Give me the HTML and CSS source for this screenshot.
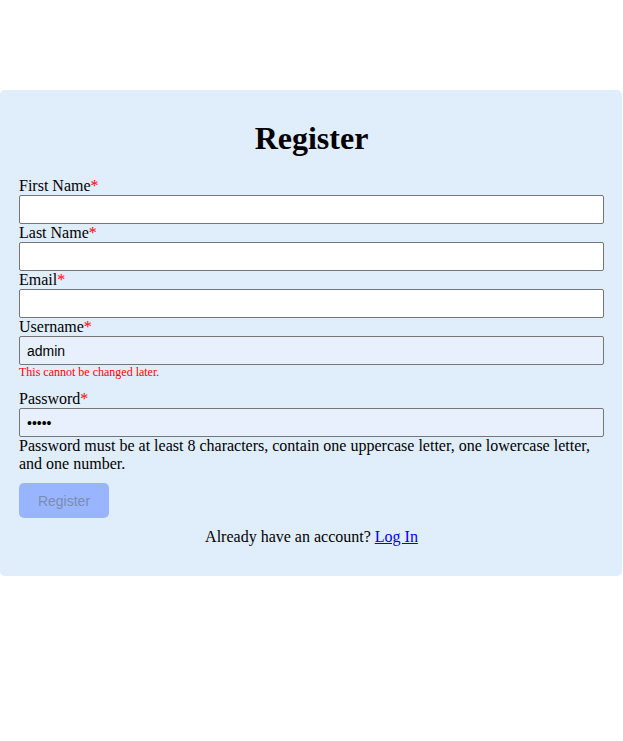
FILE: index.html
```html
<!DOCTYPE html>
<html>
<head>
<meta charset="utf-8">
<link rel="stylesheet" href="styles.css">
</head>
<body>
<div class="page">
  <form class="card">
    <h1 class="title">Register</h1>
    <label class="label">First Name<span class="req">*</span></label>
    <input class="field" type="text">
    <label class="label">Last Name<span class="req">*</span></label>
    <input class="field" type="text">
    <label class="label">Email<span class="req">*</span></label>
    <input class="field" type="email">
    <label class="label">Username<span class="req">*</span></label>
    <input class="field filled" type="text" value="admin">
    <small class="note">This cannot be changed later.</small>
    <label class="label">Password<span class="req">*</span></label>
    <input class="field filled" type="password" value="admin">
    <p class="hint">Password must be at least 8 characters, contain one uppercase letter, one lowercase letter, and one number.</p>
    <button class="btn" type="button" disabled>Register</button>
    <p class="switch">Already have an account? <a href="#" class="link">Log In</a></p>
  </form>
</div>
</body>
</html>
```

FILE: styles.css
```css
html, body {
  margin: 0;
  padding: 0;
  background: #ffffff;
}
body {
  font-family: "Liberation Serif", "Times New Roman", serif;
  font-size: 16px;
  color: #000;
}
.page {
  padding-top: 90px;
}
.card {
  display: flex;
  flex-direction: column;
  align-items: stretch;
  width: 622px;
  box-sizing: border-box;
  padding: 8px 18px 30px 19px;
  background: #e0edfb;
  border-radius: 5px;
}
.title {
  font-size: 32px;
  font-weight: bold;
  text-align: center;
  margin: 22px 0 20px;
  line-height: 37px;
}
.label {
  display: block;
  line-height: 18px;
  height: 18px;
}
.req {
  color: #ff0000;
}
.field {
  display: block;
  width: 100%;
  box-sizing: border-box;
  height: 29px;
  margin: 0;
  padding: 0 7px;
  border: 1px solid #767676;
  border-radius: 2px;
  background: #ffffff;
  font-family: "Liberation Sans", Arial, sans-serif;
  font-size: 14px;
  color: #000;
}
.filled {
  background: #e8f0fe;
}
.note {
  display: block;
  color: #ff0000;
  font-size: 12px;
  line-height: 14px;
  margin: 0 0 11px;
}
.hint {
  margin: 0;
  line-height: 18px;
}
.btn {
  align-self: flex-start;
  width: 90px;
  height: 35px;
  margin-top: 10px;
  border: none;
  border-radius: 5px;
  background: #99b5ff;
  color: #7c8cb1;
  font-family: "Liberation Sans", Arial, sans-serif;
  font-size: 14px;
  padding: 0;
}
.switch {
  margin: 10px 0 0;
  text-align: center;
  line-height: 18px;
}
.link {
  color: #0000ee;
  text-decoration: underline;
}
```
